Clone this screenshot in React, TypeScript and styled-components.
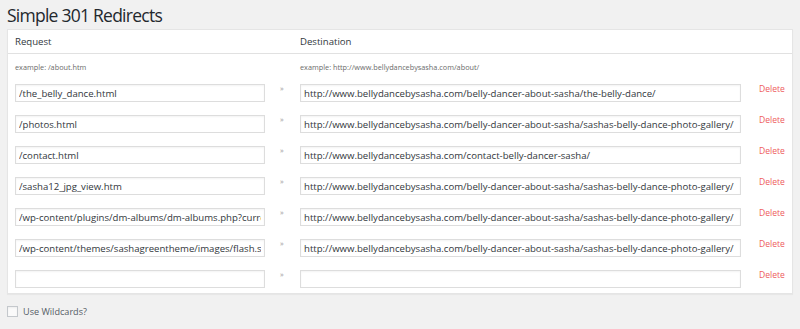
import React from 'react'
import styled, { createGlobalStyle } from 'styled-components'

const GlobalStyle = createGlobalStyle`
  html, body {
    margin: 0;
    padding: 0;
    background: #f1f1f1;
  }
  body {
    font-family: 'Open Sans', 'Noto Sans', sans-serif;
    color: #444;
  }
`

const Wrap = styled.div`
  padding: 0 7px;
  width: 800px;
  box-sizing: border-box;
`

const Title = styled.h1`
  margin: 0;
  padding: 5px 0 0;
  height: 29px;
  box-sizing: border-box;
  font-size: 17.5px;
  font-weight: 400;
  letter-spacing: -0.75px;
  line-height: 21px;
  color: #23282d;
`

const Panel = styled.div`
  background: #fff;
  border: 1px solid #e5e5e5;
  box-shadow: 0 1px 1px rgba(0, 0, 0, 0.04);
  width: 786px;
  box-sizing: border-box;
`

const COLS = '250px 35px 441px 1fr'

const HeadRow = styled.div`
  display: grid;
  grid-template-columns: 285px 1fr;
  height: 23px;
  align-items: center;
  padding-left: 7px;
  border-bottom: 1px solid #e1e1e1;
  font-size: 9.6px;
  color: #32373c;
`

const ExampleRow = styled.div`
  display: grid;
  grid-template-columns: 285px 1fr;
  height: 25px;
  align-items: center;
  padding-left: 7px;
  font-size: 7.3px;
  color: #6b6b6b;
`

const Rows = styled.div`
  display: flex;
  flex-direction: column;
  gap: 13px;
  padding: 5px 0 5px 7px;
`

const Row = styled.div`
  display: grid;
  grid-template-columns: ${COLS};
  align-items: start;
  height: 18px;
`

const Field = styled.input`
  box-sizing: border-box;
  height: 18px;
  width: 100%;
  margin: 0;
  padding: 0 3px;
  border: 1px solid #ddd;
  box-shadow: inset 0 1px 2px rgba(0, 0, 0, 0.05);
  font-family: 'Open Sans', 'Noto Sans', sans-serif;
  font-size: 9.6px;
  color: #32373c;
  background: #fff;
  outline: none;
`

const Arrow = styled.span`
  font-size: 7.5px;
  color: #999;
  line-height: 10px;
  margin-top: -1px;
  padding: 0 0 0 15px;
`

const Delete = styled.a`
  font-size: 8.6px;
  color: #ee5c5c;
  line-height: 10px;
  padding: 0 0 0 18px;
  text-decoration: none;
`

const Footer = styled.label`
  display: flex;
  align-items: center;
  gap: 5px;
  margin-top: 11px;
  font-size: 9.1px;
  color: #555d66;
`

const Box = styled.span`
  display: inline-block;
  width: 9px;
  height: 9px;
  border: 1px solid #c4c8cc;
  background: #fafafa;
  box-shadow: inset 0 1px 2px rgba(0, 0, 0, 0.05);
`

const redirects = [
  ['/the_belly_dance.html', 'http://www.bellydancebysasha.com/belly-dancer-about-sasha/the-belly-dance/'],
  ['/photos.html', 'http://www.bellydancebysasha.com/belly-dancer-about-sasha/sashas-belly-dance-photo-gallery/'],
  ['/contact.html', 'http://www.bellydancebysasha.com/contact-belly-dancer-sasha/'],
  ['/sasha12_jpg_view.htm', 'http://www.bellydancebysasha.com/belly-dancer-about-sasha/sashas-belly-dance-photo-gallery/'],
  [
    '/wp-content/plugins/dm-albums/dm-albums.php?currdir=/wp-content/uploads',
    'http://www.bellydancebysasha.com/belly-dancer-about-sasha/sashas-belly-dance-photo-gallery/',
  ],
  [
    '/wp-content/themes/sashagreentheme/images/flash.swf',
    'http://www.bellydancebysasha.com/belly-dancer-about-sasha/sashas-belly-dance-photo-gallery/',
  ],
  ['', ''],
]

export default function App() {
  return (
    <>
      <GlobalStyle />
      <Wrap>
        <Title>Simple 301 Redirects</Title>
        <Panel>
          <HeadRow>
            <span>Request</span>
            <span>Destination</span>
          </HeadRow>
          <ExampleRow>
            <span>example: /about.htm</span>
            <span>example: http://www.bellydancebysasha.com/about/</span>
          </ExampleRow>
          <Rows>
            {redirects.map(([from, to], i) => (
              <Row key={i}>
                <Field defaultValue={from} readOnly />
                <Arrow>»</Arrow>
                <Field defaultValue={to} readOnly />
                <Delete href="#">Delete</Delete>
              </Row>
            ))}
          </Rows>
        </Panel>
        <Footer>
          <Box />
          Use Wildcards?
        </Footer>
      </Wrap>
    </>
  )
}
